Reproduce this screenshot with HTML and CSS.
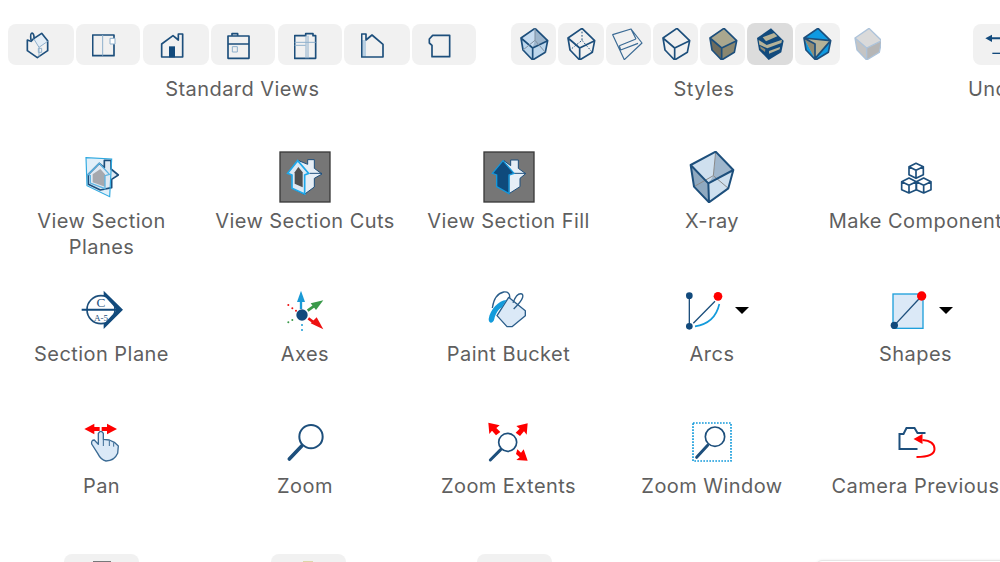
FILE: index.html
```html
<!DOCTYPE html>
<html lang="en">
<head>
    <meta charset="UTF-8">
    <meta name="viewport" content="width=device-width, initial-scale=1.0">
    <title>Customize Toolbar</title>
    <link rel="stylesheet" href="styles.css">
</head>
<body>
    <div class="toolbar-groups">
        <section class="group group-views">
            <div class="btn-row">
                <div class="view-btn view-btn-wide"><svg class="btn-icon" viewBox="75 55 96 96"><path class="pale-fill" d="M100 84 125 68 143 92 117 110Z"/><g class="line"><path d="M82 88V120L112 141L143 120V90L125 68L101 84L93 92Z"/><path d="M93 88Q90 68 96 67Q103 70 102 84"/><path class="thin" d="M101 84L117 110L143 92M117 110V138"/><rect class="thin" x="115" y="113" width="10" height="12"/></g></svg></div>
                <div class="view-btn"><svg class="btn-icon" viewBox="278 55 96 96"><g class="line"><rect x="280" y="73" width="64" height="62"/><path class="thin" d="M310 73V135"/><rect class="thin white" x="332" y="83" width="15" height="17"/></g></svg></div>
                <div class="view-btn view-btn-wide"><svg class="btn-icon" viewBox="480 55 96 96"><g class="line"><path d="M485 139V100L519 75L535 88V70H548V139Z"/></g><rect class="navy" x="507" y="107" width="18" height="33"/></svg></div>
                <div class="view-btn"><svg class="btn-icon" viewBox="681 55 96 96"><g class="line"><rect x="684" y="76" width="63" height="67"/><path d="M684 100H747M696 75V69H713V75"/><rect class="thin" x="697" y="108" width="15" height="16"/></g></svg></div>
                <div class="view-btn"><svg class="btn-icon" viewBox="130 55 96 96"><g class="line"><path d="M132 75H165V69H187V75H195V143H132Z"/><path class="thin" d="M132 95H195M132 104H165M166 75V143M172 75V143"/></g></svg></div>
                <div class="view-btn view-btn-wide"><svg class="btn-icon" viewBox="332 55 96 96"><path class="pale" d="M335 88H347V138H335Z"/><g class="line"><path d="M334 139V70H347V88L365 73L398 101V139Z"/></g></svg></div>
                <div class="view-btn"><svg class="btn-icon" viewBox="534 55 96 96"><g class="line"><path d="M548 74H599V138H546V104L538 97V85Z"/></g></svg></div>
            </div>
            <p class="group-label">Standard Views</p>
        </section>

        <section class="group group-styles">
            <div class="btn-row btn-row-styles">
                <div class="style-btn"><svg class="btn-icon" viewBox="-48 -48 96 96"><path d="M3-47 41-10 34 25-4 48-33 18-39-18Z" fill="#bcd6ec"/><path d="M-39-18 3-47 3-11-4 12Z" fill="#c6dcf0"/><path d="M3-47 41-10-4 12 3-11Z" fill="#9cb5cc"/><g class="line"><path d="M3-47 41-10 34 25-4 48-33 18-39-18ZM-39-18-4 12 41-10M-4 12V48"/><path class="thin grey" d="M3-47V-11L-33 18M3-11 34 25"/></g></svg></div>
                <div class="style-btn"><svg class="btn-icon" viewBox="-48 -48 96 96"><g class="line"><path d="M3-47 41-10 34 25-4 48-33 18-39-18ZM-39-18-4 12 41-10M-4 12V48"/><path class="thin dash" d="M3-47V-11L-33 18M3-11 34 25"/></g></svg></div>
                <div class="style-btn"><svg class="btn-icon" viewBox="-48 -48 96 96"><g class="line wire"><path d="M-46-28 9-45 42-3-11 47ZM-26 5 24-15M-22 18 30 -2M9-45 24-15M-26 5-22 18"/></g></svg></div>
                <div class="style-btn"><svg class="btn-icon" viewBox="-48 -48 96 96"><g class="line"><path d="M3-47 41-10 34 25-4 48-33 18-39-18ZM-39-18-4 12 41-10M-4 12V48"/></g></svg></div>
                <div class="style-btn"><svg class="btn-icon" viewBox="-48 -48 96 96"><path d="M3-47 41-10-4 12-39-18Z" fill="#aaa78e"/><path d="M-39-18-4 12V48L-33 18Z" fill="#6f6c5d"/><path d="M41-10-4 12V48L34 25Z" fill="#8a8770"/><g class="line"><path d="M3-47 41-10 34 25-4 48-33 18-39-18ZM-39-18-4 12 41-10M-4 12V48"/></g></svg></div>
                <div class="style-btn style-btn-on"><svg class="btn-icon" viewBox="-48 -48 96 96"><path class="navy" d="M3-47 41-10 34 25-4 48-33 18-39-18Z"/><path d="M-22-20 12-33 22-23-12-8Z" fill="#b5b298"/><path d="M-34-12-10 3 36-13 34-3-8 13-32 2Z" fill="#b5b298"/><path d="M-3 21 30 9 29 16-3 29Z" fill="#b5b298"/><path d="M-30 6-14 16-15 24-28 14Z" fill="#8d8a75"/></svg></div>
                <div class="style-btn"><svg class="btn-icon" viewBox="-48 -48 96 96"><path d="M3-47 41-10 34 25-4 48-33 18-39-18Z" fill="#0f9ae2"/><path d="M-39-18 41-10-6 44Z" fill="#b5b298"/><path d="M-39-18-6 0-6 44Z" fill="#8f8c76"/><g class="line"><path d="M3-47 41-10 34 25-4 48-33 18-39-18ZM-39-18-6 0V46M-39-18 41-10-6 44"/></g></svg></div>
                <div class="style-btn style-btn-plain"><svg class="btn-icon" viewBox="-57 -48 96 96"><path d="M3-47 41-10-4 12-39-18Z" fill="#dadada"/><path d="M-39-18-4 12V48L-33 18Z" fill="#c4c4c4"/><path d="M41-10-4 12V48L34 25Z" fill="#b6b6b6"/><path d="M3-47 41-10 34 25-4 48-33 18-39-18ZM-39-18-4 12 41-10M-4 12V48" fill="none" stroke="#adc3da" stroke-width="4"/></svg></div>
            </div>
            <p class="group-label">Styles</p>
        </section>

        <section class="group group-undo">
            <div class="view-btn undo-btn"><svg class="btn-icon" viewBox="0 0 96 96"><path class="navy" d="M37 28 57 17V25H96V31H57V39Z"/><path class="navy" d="M58 71H96V75H58Z"/></svg></div>
            <p class="group-label">Undo</p>
        </section>
    </div>

    <main class="tools">
        <div class="tool">
            <svg class="tool-icon" viewBox="45 18 156 156"><path d="M75 38 152 42 146 155 78 122Z" fill="#cde4f5" opacity=".6"/><g class="line"><path d="M82 88 115 55 130 68V46H150V72L172 90 152 103V128L118 135 82 118Z" fill="#dfe9f3"/></g><path d="M95 88 118 72 132 88V125L95 112Z" fill="#a6a8ae"/><path d="M82 88 115 55 145 88 132 92V131L88 114V92Z" fill="none" stroke="#5fb4e2" stroke-width="4"/><path class="plane" d="M75 38 152 42 146 155 78 122Z"/></svg>
            <p class="tool-label">View Section<br>Planes</p>
        </div>
        <div class="tool">
            <svg class="tool-icon" viewBox="656 18 156 156"><rect class="dark-box" x="659" y="21" width="150" height="150"/><path d="M715 47 742 58V44H762V70L785 87 762 100V126L732 148 697 130V90Z" fill="#e6eef6" stroke="#1d4f7c" stroke-width="3"/><path d="M748 85H785" stroke="#1d4f7c" stroke-width="3"/><path d="M682 85 712 47 745 85 733 90V147L695 130V90Z" fill="#dce8f3" stroke="#1fa8ea" stroke-width="5"/><path d="M703 82 714 66 727 82V127L703 116Z" fill="#4f4f4f"/></svg>
            <p class="tool-label">View Section Cuts</p>
        </div>
        <div class="tool">
            <svg class="tool-icon" viewBox="37 18 156 156"><rect class="dark-box" x="40" y="21" width="150" height="150"/><path d="M100 47 120 62V45H143V70L165 86 148 100V125L115 146V90Z" fill="#e6eef6" stroke="#1d4f7c" stroke-width="3"/><path d="M130 85H165" stroke="#1d4f7c" stroke-width="3"/><path d="M65 85 97 47 130 85 115 90V146L78 125V90Z" fill="#0f4a7c" stroke="#1598dc" stroke-width="4"/></svg>
            <p class="tool-label">View Section Fill</p>
        </div>
        <div class="tool">
            <svg class="tool-icon" viewBox="648 18 156 156"><path d="M737 20 662 60 715 115 730 92Z" fill="#cfe0ef"/><path d="M737 20 790 75 715 115 730 92Z" fill="#9fb6cc"/><path d="M662 60 672 125 717 172 715 115Z" fill="#8fa9c0"/><path d="M790 75 775 130 717 172 715 115Z" fill="#cfe0ef"/><path d="M730 92 672 125M730 92 775 130M737 20 730 92" fill="none" stroke="#8a8a8a" stroke-width="3"/><g class="line bold"><path d="M737 20 790 75 775 130 717 172 672 125 662 60ZM662 60 715 115 790 75M715 115 717 172"/></g></svg>
            <p class="tool-label">X-ray</p>
        </div>
        <div class="tool">
            <svg class="tool-icon" viewBox="88 3 156 156"><g class="line"><path d="M166 40 188 50V74L166 85 145 74V50ZM145 50 166 61 188 50M166 61V85"/><path d="M145 84 167 95V119L145 129 123 119V95ZM123 95 145 106 167 95M145 106V129"/><path d="M189 84 211 95V119L189 129 167 119V95ZM167 95 189 106 211 95M189 106V129"/></g></svg>
            <p class="tool-label">Make Component</p>
        </div>

        <div class="tool">
            <svg class="tool-icon" viewBox="45 10 156 156"><circle class="ring" cx="120" cy="87" r="42"/><path class="navy" d="M62 84H170V90H62ZM128 30 186 87 128 145V131L168 87 128 44Z"/><text class="plane-mark" x="120" y="80">C</text><text class="plane-mark plane-mark-sm" x="120" y="120">A-5</text></svg>
            <p class="tool-label">Section Plane</p>
        </div>
        <div class="tool">
            <svg class="tool-icon" viewBox="657 10 156 156"><path d="M723 85V60" stroke="#1a9ad6" stroke-width="7"/><path d="M723 30 711 64H735Z" fill="#1a9ad6"/><path d="M743 90 768 72" stroke="#3a9a4a" stroke-width="8"/><path d="M790 59 752 68 768 88Z" fill="#3a9a4a"/><path d="M745 113 768 130" stroke="#ee1111" stroke-width="8"/><path d="M790 146 752 128 770 110Z" fill="#ee1111"/><circle class="navy" cx="726" cy="103" r="17"/><g class="dots-red"><circle cx="685" cy="73" r="3"/><circle cx="697" cy="83" r="3"/><circle cx="708" cy="90" r="3"/></g><g class="dots-green"><circle cx="685" cy="125" r="3"/><circle cx="697" cy="118" r="3"/></g><g class="dots-blue"><circle cx="726" cy="133" r="3"/><circle cx="726" cy="148" r="3"/></g></svg>
            <p class="tool-label">Axes</p>
        </div>
        <div class="tool">
            <svg class="tool-icon" viewBox="38 10 156 156"><path d="M115 50 165 90V105L125 138H110L80 105Z" fill="#dbe9f7" stroke="#2a5d8a" stroke-width="4" stroke-linejoin="round"/><path d="M66 82Q72 40 100 34 120 32 118 52M128 66Q140 35 155 40 166 50 130 85" fill="none" stroke="#2a5d8a" stroke-width="4"/><path d="M108 58C85 60 60 85 55 115 55 130 68 130 72 115 75 100 85 85 95 80Z" fill="#149bdb"/></svg>
            <p class="tool-label">Paint Bucket</p>
        </div>
        <div class="tool">
            <div class="icon-wrap">
                <svg class="tool-icon" viewBox="648 10 156 156"><path d="M658 45V137M670 128 735 62" stroke="#1d4f7c" stroke-width="4"/><path d="M675 137Q735 128 748 70" fill="none" stroke="#149bdb" stroke-width="5"/><circle class="navy" cx="658" cy="45" r="10"/><circle class="navy" cx="658" cy="137" r="10"/><circle cx="744" cy="47" r="13" fill="#f00"/></svg>
                <span class="caret"></span>
            </div>
            <p class="tool-label">Arcs</p>
        </div>
        <div class="tool">
            <div class="icon-wrap">
                <svg class="tool-icon" viewBox="88 400 156 156"><rect x="97" y="430" width="90" height="103" fill="#dbe9f7" stroke="#1ea0dc" stroke-width="4"/><path d="M101 524 183 436" stroke="#1d4f7c" stroke-width="4"/><circle class="navy" cx="101" cy="524" r="11"/><circle cx="183" cy="436" r="14" fill="#f00"/></svg>
                <span class="caret"></span>
            </div>
            <p class="tool-label">Shapes</p>
        </div>

        <div class="tool">
            <svg class="tool-icon" viewBox="45 18 156 156"><path d="M112 70Q120 58 127 70V88L145 90 160 97 172 108 170 130Q160 153 135 153 120 150 110 130L92 102Q90 90 100 90L112 103Z" fill="#dbe9f7" stroke="#3a6a94" stroke-width="4" stroke-linejoin="round"/><path d="M127 88V108M145 92V108M158 98V110" stroke="#3a6a94" stroke-width="3"/><path d="M70 57 100 41V51H116V63H100V73ZM168 57 138 41V51H122V63H138V73Z" fill="#f00"/></svg>
            <p class="tool-label">Pan</p>
        </div>
        <div class="tool">
            <svg class="tool-icon" viewBox="657 18 156 156"><circle class="ring ring-lg" cx="753" cy="80" r="35"/><path class="handle" d="M725 108 688 147"/></svg>
            <p class="tool-label">Zoom</p>
        </div>
        <div class="tool">
            <svg class="tool-icon" viewBox="38 18 156 156"><circle class="ring" cx="112" cy="97" r="27"/><path class="handle handle-sm" d="M91 119 60 150"/><path d="M54 38 88 46 78 54 90 66 77 76 65 62 57 72ZM172 40 138 48 148 56 136 68 149 78 161 64 169 74ZM172 152 160 118 152 128 141 118 137 132 148 142 138 150Z" fill="#f00"/></svg>
            <p class="tool-label">Zoom Extents</p>
        </div>
        <div class="tool">
            <svg class="tool-icon" viewBox="648 18 156 156"><rect class="dotted" x="669" y="39" width="114" height="114"/><circle class="ring" cx="735" cy="80" r="29"/><path class="handle handle-sm" d="M713 106 680 142"/></svg>
            <p class="tool-label">Zoom Window</p>
        </div>
        <div class="tool">
            <svg class="tool-icon" viewBox="889.5 416 52 52"><path d="M917 449H899V434H903L906 428H914L917 433H925" fill="none" stroke="#1d4f7c" stroke-width="2"/><path d="M922 440Q934 441 934 449 934 457 916 457" fill="none" stroke="#f00" stroke-width="2"/><path d="M913 439 922 434V444Z" fill="#f00"/></svg>
            <p class="tool-label">Camera Previous</p>
        </div>
    </main>

    <div class="stub-row">
        <div class="stub-btn"><span class="stub-mark"></span></div>
        <div class="stub-btn"><span class="stub-mark stub-mark-yellow"></span></div>
        <div class="stub-btn"></div>
        <div class="stub-box"></div>
    </div>
</body>
</html>
```

FILE: styles.css
```css
html {
    overflow: hidden;
}
body {
    margin: 0;
    height: 562px;
    overflow: hidden;
    background: #fff;
    font-family: Inter, "Liberation Sans", sans-serif;
    color: #5f5f5f;
    letter-spacing: 0.45px;
}
p {
    margin: 0;
}
.toolbar-groups {
    display: flex;
    padding: 23px 0 0 8.3px;
    height: 151px;
    box-sizing: border-box;
}
.group {
    display: flex;
    flex-direction: column;
    align-items: center;
    flex-shrink: 0;
}
.group-views {
    width: 468px;
}
.group-styles {
    width: 386px;
    margin-left: 34.7px;
}
.group-undo {
    margin-left: 71px;
    align-items: flex-start;
}
.btn-row {
    display: flex;
    gap: 2.5px;
    height: 42px;
    align-self: flex-start;
}
.btn-row-styles {
    gap: 2px;
}
.view-btn {
    width: 64px;
    height: 41px;
    margin-top: 1px;
    display: flex;
    justify-content: center;
    align-items: center;
    background: #f1f1f1;
    border-radius: 8px;
}
.view-btn-wide {
    width: 65.7px;
}
.style-btn {
    width: 45.3px;
    height: 42px;
    display: flex;
    justify-content: center;
    align-items: center;
    background: #f1f1f1;
    border-radius: 8px;
}
.style-btn-on {
    background: #dcdcdc;
}
.style-btn-plain {
    background: none;
}
.undo-btn {
    margin-left: 4.7px;
    justify-content: flex-start;
}
.btn-icon {
    width: 32px;
    height: 32px;
    flex-shrink: 0;
}
.group-label {
    margin-top: 11px;
    font-size: 20px;
    line-height: 26px;
    white-space: nowrap;
}
.tools {
    display: grid;
    grid-template-columns: repeat(5, 203.5px);
    grid-auto-rows: 132.5px;
    margin-left: -0.25px;
}
.tool {
    display: flex;
    flex-direction: column;
    align-items: center;
}
.tool-icon {
    display: block;
    width: 52px;
    height: 52px;
    flex-shrink: 0;
}
.icon-wrap {
    position: relative;
    width: 52px;
    height: 52px;
}
.caret {
    position: absolute;
    left: 49px;
    top: 23px;
    border-top: 7px solid #000;
    border-left: 7.5px solid transparent;
    border-right: 7.5px solid transparent;
}
.tool-label {
    margin-top: 5px;
    font-size: 20px;
    line-height: 26px;
    text-align: center;
    white-space: nowrap;
}
.stub-row {
    display: flex;
    align-items: flex-start;
    margin-top: 5.5px;
    padding-left: 64px;
}
.stub-btn {
    width: 75px;
    height: 41px;
    margin-right: 131.5px;
    background: #f1f1f1;
    border-radius: 8px;
    display: flex;
    justify-content: center;
    flex-shrink: 0;
}
.stub-mark {
    width: 18px;
    height: 3px;
    margin-top: 7px;
    background: #77787a;
}
.stub-mark-yellow {
    width: 10px;
    background: #ddd6a8;
}
.stub-box {
    width: 190px;
    height: 40px;
    margin: 6px 0 0 132px;
    flex-shrink: 0;
    border: 1px solid #e6e6e6;
    border-radius: 6px;
    box-shadow: 0 0 3px rgba(0, 0, 0, 0.08);
}

/* svg bits */
.line {
    fill: none;
    stroke: #1d4f7c;
    stroke-width: 5;
    stroke-linejoin: round;
}
.line .thin {
    stroke: #8fb0cc;
    stroke-width: 3;
}
.line .white {
    fill: #fff;
}
.line .grey {
    stroke: #7f8fa0;
}
.line .dash {
    stroke: #1d4f7c;
    stroke-dasharray: 5 5;
}
.line.wire {
    stroke: #3a6a94;
    stroke-width: 3.5;
}
.line.bold {
    stroke-width: 6;
}
.navy {
    fill: #124a7c;
}
.pale {
    fill: #b8cfe2;
}
.pale-fill {
    fill: #e3edf6;
}
.plane {
    fill: none;
    stroke: #2fa9e0;
    stroke-width: 3.5;
}
.dark-box {
    fill: #767676;
    stroke: #3a3a3a;
    stroke-width: 4;
}
.ring {
    fill: none;
    stroke: #1d4f7c;
    stroke-width: 5;
}
.ring-lg {
    stroke-width: 6;
}
.handle {
    fill: none;
    stroke: #1d4f7c;
    stroke-width: 11;
    stroke-linecap: round;
}
.handle-sm {
    stroke-width: 9;
}
.dotted {
    fill: none;
    stroke: #149bdb;
    stroke-width: 5;
    stroke-dasharray: 5 4;
}
.plane-mark {
    font-family: "Liberation Serif", serif;
    font-size: 40px;
    letter-spacing: 0;
    fill: #1d4f7c;
    text-anchor: middle;
}
.plane-mark-sm {
    font-size: 27px;
}
.dots-red {
    fill: #ee1111;
}
.dots-green {
    fill: #3a9a4a;
}
.dots-blue {
    fill: #1a9ad6;
}
```
